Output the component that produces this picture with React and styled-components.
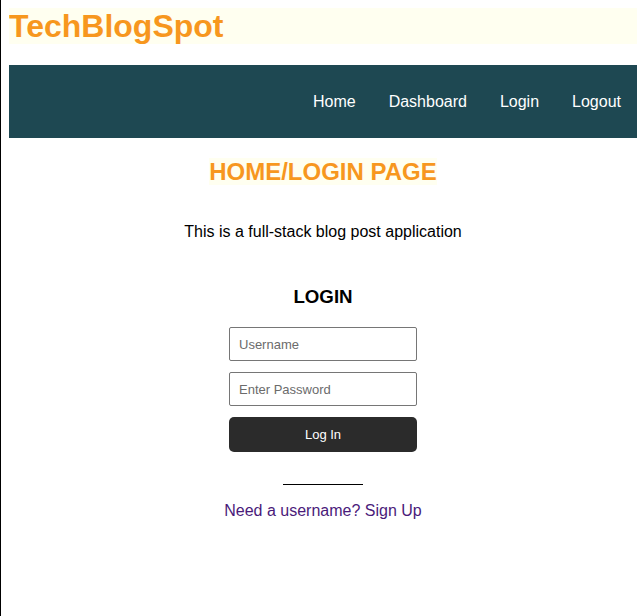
import React from "react";
import styled, { createGlobalStyle } from "styled-components";

const GlobalStyle = createGlobalStyle`
  html {
    border-left: 1px solid #000;
    min-height: 100%;
    box-sizing: border-box;
  }
  body {
    margin: 8px 6px 8px 8px;
    font-family: "Liberation Sans", Arial, sans-serif;
    color: #000;
    background: #fff;
  }
`;

const navLinks = ["Home", "Dashboard", "Login", "Logout"];

const App = () => {
  return (
    <>
      <GlobalStyle />
      <Header>
        <Brand>TechBlogSpot</Brand>
      </Header>
      <Nav>
        {navLinks.map((link) => (
          <NavLink key={link} href="#">
            {link}
          </NavLink>
        ))}
      </Nav>
      <Main>
        <PageTitle>
          <span>HOME/LOGIN PAGE</span>
        </PageTitle>
        <Intro>This is a full-stack blog post application</Intro>
        <LoginForm onSubmit={(e) => e.preventDefault()}>
          <FormTitle>LOGIN</FormTitle>
          <Input type="text" placeholder="Username" />
          <Input type="password" placeholder="Enter Password" />
          <Button type="submit">Log In</Button>
        </LoginForm>
        <Divider />
        <SignUpLink href="#">Need a username? Sign Up</SignUpLink>
      </Main>
    </>
  );
};

export default App;

const Header = styled.header`
  background: #fffff0;
  height: 36px;
  display: flex;
  align-items: center;
`;

const Brand = styled.h1`
  margin: 0;
  font-size: 32px;
  font-weight: bold;
  color: #f7971e;
  line-height: 36px;
`;

const Nav = styled.nav`
  margin-top: 21px;
  height: 73px;
  background: #1e4852;
  display: flex;
  justify-content: flex-end;
  align-items: center;
  padding-right: 0;
`;

const NavLink = styled.a`
  color: #fff;
  text-decoration: none;
  font-size: 16px;
  padding: 0 16px 0 17px;
  margin-top: 0;

  &:first-child {
    padding-left: 0;
  }
`;

const Main = styled.main`
  display: flex;
  flex-direction: column;
  align-items: center;
`;

const PageTitle = styled.h2`
  margin: 20px 0 0;
  font-size: 24px;
  font-weight: bold;
  color: #f7971e;
  line-height: 28px;

  span {
    background: #fffff0;
  }
`;

const Intro = styled.p`
  margin: 37px 0 0;
  font-size: 16px;
  line-height: 18px;
`;

const LoginForm = styled.form`
  margin-top: 45px;
  display: flex;
  flex-direction: column;
  align-items: center;
  gap: 11px;
`;

const FormTitle = styled.h3`
  margin: 0 0 9px;
  font-size: 18.72px;
  font-weight: bold;
  line-height: 21px;
`;

const Input = styled.input`
  box-sizing: border-box;
  width: 188px;
  height: 34px;
  padding: 0 9px;
  border: 1px solid #767676;
  border-radius: 2px;
  font-family: "Liberation Sans", Arial, sans-serif;
  font-size: 13px;
  color: #333;

  &::placeholder {
    color: #6b6b6b;
  }
`;

const Button = styled.button`
  box-sizing: border-box;
  width: 188px;
  height: 35px;
  border: none;
  border-radius: 5px;
  background: #2b2b2b;
  color: #fff;
  font-family: "Liberation Sans", Arial, sans-serif;
  font-size: 13px;
  cursor: pointer;
`;

const Divider = styled.hr`
  width: 80px;
  margin: 32px 0 0;
  border: none;
  border-top: 1px solid #000;
`;

const SignUpLink = styled.a`
  margin-top: 17px;
  color: #4a1a7a;
  text-decoration: none;
  font-size: 16px;
  line-height: 18px;
`;
